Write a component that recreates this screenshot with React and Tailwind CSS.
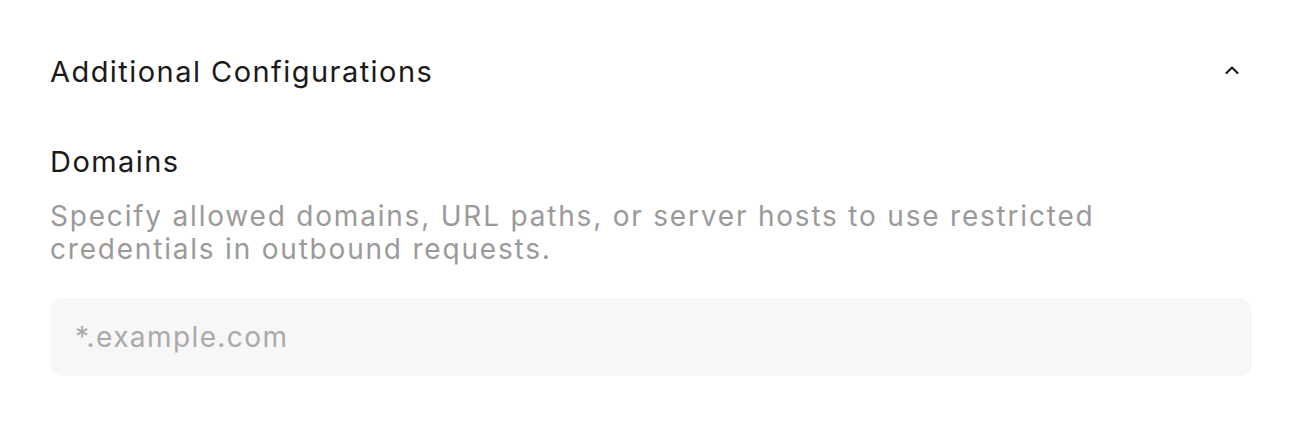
export default function App() {
  return (
    <div className="min-h-[421px] w-[1300px] bg-white px-[50px] pt-[50px] font-['Inter',sans-serif]">
      <div className="flex items-center justify-between">
        <h2 className="text-[29px] leading-[44px] tracking-[1.45px] text-[#1a1a1a]">Additional Configurations</h2>
        <svg
          className="mr-[11px] mb-[5px]"
          width="14"
          height="8"
          viewBox="0 0 14 8"
          fill="none"
          stroke="#111"
          strokeWidth="2"
          strokeLinecap="round"
          strokeLinejoin="round"
        >
          <path d="M1.5 7L7 1.5L12.5 7" />
        </svg>
      </div>

      <div className="mt-[50px]">
        <div className="text-[29px] leading-[36px] tracking-[1.45px] text-[#1a1a1a]">Domains</div>
        <p className="mt-[20px] max-w-[1150px] text-[28px] leading-[33px] tracking-[1.8px] text-[#9a9a9a]">
          Specify allowed domains, URL paths, or server hosts to use restricted credentials in outbound requests.
        </p>
        <input
          type="text"
          placeholder="*.example.com"
          className="mt-[32px] h-[78px] w-[1202px] rounded-[13px] bg-[#f7f7f7] px-[25px] text-[28px] tracking-[1.4px] text-[#1a1a1a] outline-none placeholder:text-[#aaaaaa]"
        />
      </div>
    </div>
  );
}
